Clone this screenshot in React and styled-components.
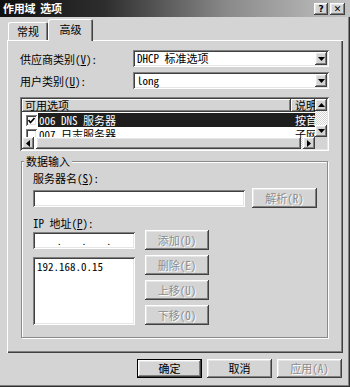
import React from "react";
import styled, { createGlobalStyle, css } from "styled-components";

const FACE = "#d4d4d4";

const raised = css`
  background: ${FACE};
  box-shadow: inset -1px -1px #404040, inset 1px 1px #ffffff,
    inset -2px -2px #808080, inset 2px 2px #e6e6e6;
`;

const sunken = css`
  box-shadow: inset 1px 1px #808080, inset -1px -1px #ffffff,
    inset 2px 2px #404040, inset -2px -2px #e6e6e6;
`;

const GlobalStyle = createGlobalStyle`
  html, body { margin: 0; padding: 0; background: ${FACE}; }
  body {
    font-family: "Noto Sans Mono CJK SC", "Noto Sans CJK SC", sans-serif;
    font-size: 11px;
    color: #000;
  }
  * { box-sizing: border-box; }
`;

const Window = styled.div`
  width: 350px;
  height: 387px;
  background: ${FACE};
  display: flex;
  flex-direction: column;
  overflow: hidden;
  box-shadow: inset -1px -1px #303030, inset -2px -2px #808080;
`;

const TitleBar = styled.div`
  height: 17px;
  flex: none;
  display: flex;
  align-items: center;
  justify-content: space-between;
  padding: 0 5px 0 3px;
  background: linear-gradient(90deg, #101010 0%, #2e2e2e 30%, #8a8a8a 65%, #c2c2c2 100%);
`;

const TitleText = styled.div`
  color: #fff;
  font-weight: 700;
  font-size: 11px;
  line-height: 17px;
  letter-spacing: -0.3px;
`;

const TitleButtons = styled.div`
  display: flex;
  gap: 2px;
`;

const TitleButton = styled.div`
  ${raised};
  width: ${(p) => p.$w || 14}px;
  height: 12px;
  display: flex;
  align-items: center;
  justify-content: center;
  font-family: "DejaVu Sans", sans-serif;
  font-weight: 700;
  font-size: 9px;
  line-height: 12px;
`;

const Client = styled.div`
  flex: 1;
  display: flex;
  flex-direction: column;
  padding: 2px 7px 0 7px;
`;

const TabsRow = styled.div`
  height: 21px;
  display: flex;
  align-items: flex-end;
  padding-left: 1px;
  position: relative;
  z-index: 1;
`;

const Tab = styled.div`
  width: ${(p) => p.$w}px;
  height: ${(p) => (p.$active ? 22 : 18)}px;
  margin-bottom: ${(p) => (p.$active ? -1 : 0)}px;
  background: ${FACE};
  border-radius: 2px 2px 0 0;
  box-shadow: inset 1px 1px #ffffff, inset -1px 0 #404040, inset -2px 0 #808080;
  display: flex;
  align-items: ${(p) => (p.$active ? "flex-start" : "center")};
  padding-top: ${(p) => (p.$active ? 3 : 0)}px;
  justify-content: center;
  line-height: 14px;
`;

const Panel = styled.div`
  width: 336px;
  height: 313px;
  flex: none;
  background: ${FACE};
  box-shadow: inset 1px 1px #ffffff, inset -1px -1px #404040, inset -2px -2px #808080;
  padding: 10px 14px 0 13px;
  display: flex;
  flex-direction: column;
`;

const FieldRow = styled.div`
  display: flex;
  align-items: center;
  height: 17px;
  margin-top: ${(p) => p.$mt || 0}px;
`;

const FieldLabel = styled.div`
  width: 113px;
  line-height: 14px;
`;

const Combo = styled.div`
  ${sunken};
  background: #fff;
  width: 196px;
  height: 17px;
  display: flex;
  align-items: center;
  justify-content: space-between;
  padding: 2px 2px 2px 4px;
  line-height: 13px;
`;

const ArrowButton = styled.div`
  ${raised};
  width: 12px;
  height: ${(p) => p.$h || 12}px;
  flex: none;
  display: flex;
  align-items: center;
  justify-content: center;
`;

const ListView = styled.div`
  ${sunken};
  background: #fff;
  width: 309px;
  height: 54px;
  margin-top: 8px;
  padding: 2px;
  display: grid;
  grid-template-columns: 1fr 12px;
  grid-template-rows: 1fr 12px;
`;

const ListMain = styled.div`
  overflow: hidden;
  display: flex;
  flex-direction: column;
`;

const HeaderRow = styled.div`
  display: flex;
  height: 13px;
  flex: none;
`;

const HeaderCell = styled.div`
  ${raised};
  box-shadow: inset -1px -1px #404040, inset 1px 1px #ffffff, inset -2px -2px #808080;
  width: ${(p) => (p.$w ? `${p.$w}px` : "auto")};
  flex: ${(p) => (p.$w ? "none" : 1)};
  padding-left: ${(p) => p.$pl || 3}px;
  line-height: 13px;
  overflow: hidden;
  white-space: nowrap;
`;

const ItemRow = styled.div`
  display: flex;
  align-items: center;
  height: 14px;
  flex: none;
  padding-left: 4px;
  margin-top: ${(p) => p.$mt || 0}px;
`;

const CheckBox = styled.div`
  ${sunken};
  background: #fff;
  width: 11px;
  height: 11px;
  flex: none;
  display: flex;
  align-items: center;
  justify-content: center;
`;

const ItemBody = styled.div`
  flex: 1;
  display: flex;
  height: 14px;
  margin-left: 1px;
  background: ${(p) => (p.$selected ? "#1e1e1e" : "transparent")};
  color: ${(p) => (p.$selected ? "#fff" : "#000")};
  line-height: 14px;
  white-space: nowrap;
  overflow: hidden;
`;

const ItemName = styled.div`
  width: 254px;
  flex: none;
  padding-left: 1px;
`;

const ItemDesc = styled.div`
  flex: 1;
  padding-left: 3px;
  overflow: hidden;
`;

const VScroll = styled.div`
  display: flex;
  flex-direction: column;
`;

const HScroll = styled.div`
  display: flex;
`;

const Track = styled.div`
  flex: 1;
  background: repeating-conic-gradient(#ffffff 0 25%, #d4d4d4 0 50%) 0 0 / 2px 2px;
`;

const Thumb = styled.div`
  ${raised};
  flex: 1;
  margin-left: 2px;
`;

const Corner = styled.div`
  background: ${FACE};
`;

const GroupBox = styled.div`
  position: relative;
  margin-top: 10px;
  margin-left: 1px;
  width: 307px;
  height: 177px;
  border: 1px solid #8a8a8a;
  box-shadow: inset 1px 1px #ffffff, 1px 1px #ffffff;
  padding: 10px 0 0 11px;
  display: flex;
  flex-direction: column;
`;

const Legend = styled.div`
  position: absolute;
  top: -7px;
  left: 2px;
  padding: 0 2px;
  background: ${FACE};
  line-height: 13px;
`;

const Label = styled.div`
  line-height: 13px;
  height: 13px;
  margin-top: ${(p) => p.$mt || 0}px;
`;

const InlineRow = styled.div`
  display: flex;
  align-items: center;
  gap: 7px;
  margin-top: 3px;
`;

const TextField = styled.div`
  ${sunken};
  background: #fff;
  width: ${(p) => p.$w}px;
  height: ${(p) => p.$h || 17}px;
  margin-top: ${(p) => p.$mt || 0}px;
  padding: ${(p) => (p.$pad ? "3px 4px" : "0")};
  line-height: 13px;
`;

const IpField = styled(TextField)`
  display: flex;
  align-items: flex-end;
  padding: 0 2px 3px 2px;
  line-height: 8px;
`;

const IpSeg = styled.span`
  width: 24px;
`;

const IpDot = styled.span`
  width: 1px;
  display: flex;
  justify-content: center;
  font-size: 9px;
`;

const Columns = styled.div`
  display: flex;
  gap: 10px;
`;

const Column = styled.div`
  display: flex;
  flex-direction: column;
  gap: ${(p) => p.$gap || 0}px;
`;

const Button = styled.div`
  ${raised};
  ${(p) =>
    p.$default &&
    css`
      border: 1px solid #000;
    `}
  width: ${(p) => p.$w || 65}px;
  height: ${(p) => p.$h || 20}px;
  flex: none;
  display: flex;
  align-items: center;
  justify-content: center;
  line-height: 13px;
  color: ${(p) => (p.$disabled ? "#8c8c8c" : "#000")};
  text-shadow: ${(p) => (p.$disabled ? "1px 1px #ffffff" : "none")};
  font-weight: ${(p) => (p.$bold ? 700 : 400)};
`;

const Footer = styled.div`
  display: flex;
  justify-content: flex-end;
  gap: 5px;
  margin-top: 6px;
  padding-right: 1px;
`;

const Down = () => (
  <svg width="7" height="4" viewBox="0 0 7 4">
    <polygon points="0,0 7,0 3.5,4" fill="#000" />
  </svg>
);
const Up = () => (
  <svg width="7" height="4" viewBox="0 0 7 4">
    <polygon points="0,4 7,4 3.5,0" fill="#000" />
  </svg>
);
const Left = () => (
  <svg width="4" height="7" viewBox="0 0 4 7">
    <polygon points="4,0 4,7 0,3.5" fill="#000" />
  </svg>
);
const Right = () => (
  <svg width="4" height="7" viewBox="0 0 4 7">
    <polygon points="0,0 0,7 4,3.5" fill="#000" />
  </svg>
);
const Check = () => (
  <svg width="7" height="7" viewBox="0 0 7 7">
    <polyline points="0.5,3 2.5,5.5 6.5,1" fill="none" stroke="#000" strokeWidth="1.6" />
  </svg>
);

export default function App() {
  return (
    <>
      <GlobalStyle />
      <Window>
        <TitleBar>
          <TitleText>作用域 选项</TitleText>
          <TitleButtons>
            <TitleButton $w={14}>?</TitleButton>
            <TitleButton $w={15}>✕</TitleButton>
          </TitleButtons>
        </TitleBar>
        <Client>
          <TabsRow>
            <Tab $w={40}>常规</Tab>
            <Tab $w={45} $active>
              高级
            </Tab>
          </TabsRow>
          <Panel>
            <FieldRow>
              <FieldLabel>
                供应商类别(<u>V</u>):
              </FieldLabel>
              <Combo>
                <span>DHCP 标准选项</span>
                <ArrowButton $h={13}>
                  <Down />
                </ArrowButton>
              </Combo>
            </FieldRow>
            <FieldRow $mt={5}>
              <FieldLabel>
                用户类别(<u>U</u>):
              </FieldLabel>
              <Combo>
                <span>long</span>
                <ArrowButton $h={13}>
                  <Down />
                </ArrowButton>
              </Combo>
            </FieldRow>

            <ListView>
              <ListMain>
                <HeaderRow>
                  <HeaderCell $w={269}>可用选项</HeaderCell>
                  <HeaderCell $pl={4}>说明</HeaderCell>
                </HeaderRow>
                <ItemRow $mt={1}>
                  <CheckBox>
                    <Check />
                  </CheckBox>
                  <ItemBody $selected>
                    <ItemName>006 DNS 服务器</ItemName>
                    <ItemDesc>按首选项排列</ItemDesc>
                  </ItemBody>
                </ItemRow>
                <ItemRow>
                  <CheckBox />
                  <ItemBody>
                    <ItemName>007 日志服务器</ItemName>
                    <ItemDesc>子网上可用</ItemDesc>
                  </ItemBody>
                </ItemRow>
              </ListMain>
              <VScroll>
                <ArrowButton>
                  <Up />
                </ArrowButton>
                <Track />
                <ArrowButton>
                  <Down />
                </ArrowButton>
              </VScroll>
              <HScroll>
                <ArrowButton>
                  <Left />
                </ArrowButton>
                <Thumb />
                <Track style={{ flex: "0 0 2px" }} />
                <ArrowButton>
                  <Right />
                </ArrowButton>
              </HScroll>
              <Corner />
            </ListView>

            <GroupBox>
              <Legend>数据输入</Legend>
              <Label>
                服务器名(<u>S</u>):
              </Label>
              <InlineRow>
                <TextField $w={212} />
                <Button $disabled>解析(R)</Button>
              </InlineRow>
              <Label $mt={9}>
                IP 地址(<u>P</u>):
              </Label>
              <Columns>
                <Column>
                  <IpField $w={102} $mt={2}>
                    <IpSeg />
                    <IpDot>.</IpDot>
                    <IpSeg />
                    <IpDot>.</IpDot>
                    <IpSeg />
                    <IpDot>.</IpDot>
                    <IpSeg />
                  </IpField>
                  <TextField $w={102} $h={68} $mt={8} $pad>
                    192.168.0.15
                  </TextField>
                </Column>
                <Column $gap={5}>
                  <Button $w={64} $disabled>添加(D)</Button>
                  <Button $w={64} $disabled>删除(E)</Button>
                  <Button $w={64} $disabled>上移(U)</Button>
                  <Button $w={64} $disabled>下移(O)</Button>
                </Column>
              </Columns>
            </GroupBox>
          </Panel>
          <Footer>
            <Button $default $w={65} $h={19}>确定</Button>
            <Button $w={65} $h={19}>取消</Button>
            <Button $w={65} $h={19} $disabled>应用(A)</Button>
          </Footer>
        </Client>
      </Window>
    </>
  );
}
